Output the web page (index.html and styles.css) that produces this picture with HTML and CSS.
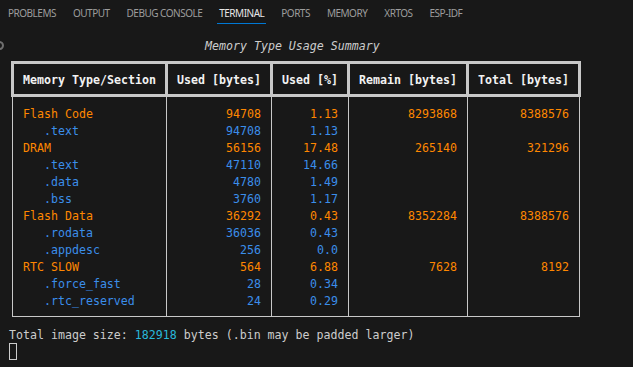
FILE: index.html
```html
<!DOCTYPE html>
<html>
<head>
<meta charset="utf-8">
<link rel="stylesheet" href="styles.css">
</head>
<body>
<div class="tabs">
  <span class="tab">PROBLEMS</span>
  <span class="tab">OUTPUT</span>
  <span class="tab">DEBUG CONSOLE</span>
  <span class="tab active">TERMINAL</span>
  <span class="tab">PORTS</span>
  <span class="tab">MEMORY</span>
  <span class="tab">XRTOS</span>
  <span class="tab">ESP-IDF</span>
</div>
<div class="term">
  <span class="deco"></span>
  <div class="title">Memory Type Usage Summary</div>
  <div class="thead">
    <div class="h">Memory Type/Section</div>
    <div class="h">Used [bytes]</div>
    <div class="h">Used [%]</div>
    <div class="h">Remain [bytes]</div>
    <div class="h">Total [bytes]</div>
  </div>
  <div class="tbody">
    <div class="c name o">Flash Code</div><div class="c num o">94708</div><div class="c num o">1.13</div><div class="c num o">8293868</div><div class="c num o">8388576</div>
    <div class="c name b">   .text</div><div class="c num b">94708</div><div class="c num b">1.13</div><div class="c num"></div><div class="c num"></div>
    <div class="c name o">DRAM</div><div class="c num o">56156</div><div class="c num o">17.48</div><div class="c num o">265140</div><div class="c num o">321296</div>
    <div class="c name b">   .text</div><div class="c num b">47110</div><div class="c num b">14.66</div><div class="c num"></div><div class="c num"></div>
    <div class="c name b">   .data</div><div class="c num b">4780</div><div class="c num b">1.49</div><div class="c num"></div><div class="c num"></div>
    <div class="c name b">   .bss</div><div class="c num b">3760</div><div class="c num b">1.17</div><div class="c num"></div><div class="c num"></div>
    <div class="c name o">Flash Data</div><div class="c num o">36292</div><div class="c num o">0.43</div><div class="c num o">8352284</div><div class="c num o">8388576</div>
    <div class="c name b">   .rodata</div><div class="c num b">36036</div><div class="c num b">0.43</div><div class="c num"></div><div class="c num"></div>
    <div class="c name b">   .appdesc</div><div class="c num b">256</div><div class="c num b">0.0</div><div class="c num"></div><div class="c num"></div>
    <div class="c name o">RTC SLOW</div><div class="c num o">564</div><div class="c num o">6.88</div><div class="c num o">7628</div><div class="c num o">8192</div>
    <div class="c name b">   .force_fast</div><div class="c num b">28</div><div class="c num b">0.34</div><div class="c num"></div><div class="c num"></div>
    <div class="c name b">   .rtc_reserved</div><div class="c num b">24</div><div class="c num b">0.29</div><div class="c num"></div><div class="c num"></div>
  </div>
  <div class="line total">Total image size: <span class="cyan">182918</span> bytes (.bin may be padded larger)</div>
  <div class="cursor-line"><span class="cursor"></span></div>
</div>
</body>
</html>
```
FILE: styles.css
```css
* { box-sizing: border-box; }
html, body {
  margin: 0;
  padding: 0;
  background: #181818;
  width: 633px;
  height: 367px;
  overflow: hidden;
}
.tabs {
  display: flex;
  gap: 13px;
  padding: 5px 0 0 6px;
  height: 37px;
  font-family: "Noto Sans", sans-serif;
  font-size: 10px;
  letter-spacing: -0.5px;
  color: #9d9d9d;
}
.tab {
  padding: 0 2px;
  height: 19px;
  line-height: 17px;
}
.tab.active {
  color: #e7e7e7;
  border-bottom: 1px solid #0078d4;
}
.term {
  position: relative;
  padding-left: 9px;
  font-family: "DejaVu Sans Mono", monospace;
  font-size: 11.62px;
  line-height: 15px;
  color: #cccccc;
}
.deco {
  position: absolute;
  left: -5px;
  top: 4px;
  width: 9px;
  height: 9px;
  border: 2px solid #6f6f6f;
  border-radius: 50%;
}
.title {
  height: 17px;
  padding: 2px 0 0 196px;
  font-style: italic;
  white-space: pre;
}
.thead {
  margin: 7px 0 0 2px;
  width: 570px;
  display: grid;
  grid-template-columns: 154px 105px 77px 119px 109px;
  border: 3px solid #c8c8c8;
}
.h {
  padding: 9px 0 6px;
  text-align: center;
  font-weight: bold;
  color: #f2f2f2;
  white-space: pre;
  border-right: 3px solid #c8c8c8;
}
.h:last-child { border-right: none; }
.tbody {
  margin-left: 3px;
  width: 568px;
  display: grid;
  grid-template-columns: 154px 105px 77px 119px 111px;
  border: 1px solid #c8c8c8;
  border-top: none;
}
.c {
  white-space: pre;
  padding-top: 2px;
  min-height: 17px;
  border-right: 1px solid #c8c8c8;
}
.c:nth-child(5n) { border-right: none; }
.c:nth-child(-n+5) { padding-top: 10px; }
.c:nth-last-child(-n+5) { padding-bottom: 7px; }
.name { padding-left: 10px; }
.num { padding-right: 10px; text-align: right; }
.o { color: #ff8700; }
.b { color: #3b8eea; }
.cyan { color: #29b8db; }
.line {
  height: 17px;
  padding-top: 2px;
  white-space: pre;
}
.total { margin-top: 9px; }
.cursor-line {
  height: 17px;
  line-height: 17px;
}
.cursor {
  display: inline-block;
  width: 8px;
  height: 17px;
  border: 1px solid #cccccc;
  vertical-align: top;
}
```
